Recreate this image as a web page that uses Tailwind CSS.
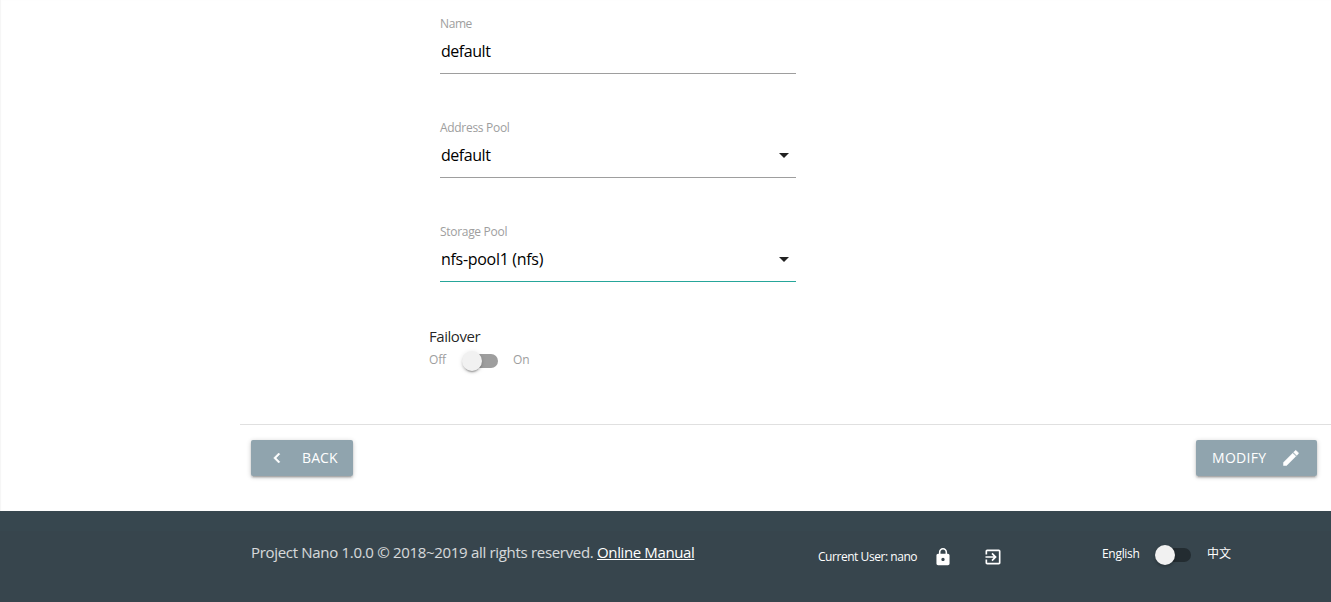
<!DOCTYPE html>
<html lang="en">
<head>
<meta charset="utf-8">
<title>Project Nano</title>
<script src="https://cdn.jsdelivr.net/npm/@tailwindcss/browser@4"></script>
</head>
<body class="bg-white font-['Open_Sans','Noto_Sans_CJK_SC',sans-serif] text-[15px] text-black/87 h-[602px] flex flex-col overflow-hidden">
<main class="h-[511px] shrink-0 pl-60 shadow-[inset_1px_0_1px_rgba(0,0,0,0.04)]">
  <form class="h-[424px] pl-[189px] pt-[15px]">
    <div class="ml-[11px] w-[356px] h-[104px]">
      <label class="block text-xs leading-[18px] text-[#9e9e9e] tracking-[-0.4px]">Name</label>
      <div class="h-[41px] border-b border-[#9e9e9e] text-black text-base leading-[37px] tracking-[-0.45px] pl-px">default</div>
    </div>
    <div class="ml-[11px] w-[356px] h-[104px]">
      <label class="block text-xs leading-[18px] text-[#9e9e9e] tracking-[-0.3px]">Address Pool</label>
      <div class="h-[41px] border-b border-[#9e9e9e] text-black text-base leading-[37px] tracking-[-0.45px] pl-px flex justify-between"><span>default</span><svg class="w-6 h-6 mt-[6px]" viewBox="0 0 24 24"><path fill="#212121" d="M7 10l5 5 5-5z"/></svg></div>
    </div>
    <div class="ml-[11px] w-[356px] h-[104px]">
      <label class="block text-xs leading-[18px] text-[#9e9e9e] tracking-[-0.3px]">Storage Pool</label>
      <div class="h-[41px] border-b border-[#26a69a] text-black text-base leading-[37px] tracking-[-0.3px] pl-px flex justify-between"><span>nfs-pool1 (nfs)</span><svg class="w-6 h-6 mt-[6px]" viewBox="0 0 24 24"><path fill="#212121" d="M7 10l5 5 5-5z"/></svg></div>
    </div>
    <div class="leading-[18px] h-[21px] tracking-[-0.45px]">Failover</div>
    <div class="flex items-center text-xs text-[#9e9e9e] h-6">
      <span class="w-[36px] tracking-[-0.2px]">Off</span>
      <span class="w-[33px] h-[14px] rounded-full bg-[#9e9e9e] mt-[2px] flex items-center"><span class="block w-5 h-5 shrink-0 -ml-[3px] rounded-full bg-[#f1f1f1] shadow-[0_2px_2px_0_rgba(0,0,0,0.14),0_1px_5px_0_rgba(0,0,0,0.12),0_3px_1px_-2px_rgba(0,0,0,0.2)]"></span></span>
      <span class="ml-[15px] tracking-[-0.2px]">On</span>
    </div>
  </form>
  <div class="h-[87px] border-t border-[#e0e0e0] pl-[11px] pr-[14px] pt-[15px] flex justify-between items-start">
    <button class="w-[102px] h-[36px] rounded-[2px] bg-[#90a4ae] text-white text-sm flex items-center pl-4 shadow-[0_2px_2px_0_rgba(0,0,0,0.14),0_3px_1px_-2px_rgba(0,0,0,0.12),0_1px_5px_0_rgba(0,0,0,0.2)]"><svg class="w-[20px] h-[20px]" viewBox="0 0 24 24"><path fill="#fff" stroke="#fff" stroke-width="0.6" d="M15.41 7.41L14 6l-6 6 6 6 1.41-1.41L10.83 12z"/></svg><span class="ml-[15px] tracking-[0.1px]">BACK</span></button>
    <button class="w-[121px] h-[36px] rounded-[2px] bg-[#90a4ae] text-white text-sm flex items-center justify-between px-4 shadow-[0_2px_2px_0_rgba(0,0,0,0.14),0_3px_1px_-2px_rgba(0,0,0,0.12),0_1px_5px_0_rgba(0,0,0,0.2)]"><span class="tracking-[0.3px]">MODIFY</span><svg class="w-[20px] h-[20px]" viewBox="0 0 24 24"><path fill="#fff" stroke="#fff" stroke-width="0.6" d="M3 17.25V21h3.75L17.81 9.94l-3.75-3.75L3 17.25zM20.71 7.04c.39-.39.39-1.02 0-1.41l-2.34-2.34c-.39-.39-1.02-.39-1.41 0l-1.83 1.83 3.75 3.75 1.83-1.83z"/></svg></button>
  </div>
</main>
<footer class="h-[91px] shrink-0 bg-[#37474f] pt-[20px]">
 <div class="h-[71px] bg-[#37454d] pl-[251px] flex items-start">
  <div class="w-[567px] h-[42px] leading-[42px] text-white/80 tracking-[-0.31px] whitespace-nowrap">Project Nano 1.0.0 © 2018~2019 all rights reserved. <a class="text-white underline tracking-[-0.38px]">Online Manual</a></div>
  <div class="w-[284px] flex items-center text-xs text-white h-[52px]">
    <span class="w-[117px] tracking-[-0.45px] whitespace-nowrap">Current User: nano</span>
    <svg class="w-[16px] h-[18px]" viewBox="3 1 18 22"><path fill="#fff" d="M18 8h-1V6c0-2.76-2.24-5-5-5S7 3.24 7 6v2H6c-1.100 0-2 .9-2 2v10c0 1.100.9 2 2 2h12c1.100 0 2-.9 2-2V10c0-1.100-.9-2-2-2zm-6 9c-1.100 0-2-.9-2-2s.9-2 2-2 2 .9 2 2-.9 2-2 2zm3.100-9H8.900V6c0-1.710 1.390-3.100 3.100-3.100 1.710 0 3.100 1.390 3.100 3.100v2z"/></svg>
    <svg class="w-[20px] h-[20px] ml-[32px]" viewBox="0 0 24 24"><path fill="#fff" d="M10.090 15.590L11.500 17l5-5-5-5-1.410 1.410L12.670 11H3v2h9.670l-2.580 2.590zM19 3H5c-1.110 0-2 .9-2 2v4h2V5h14v14H5v-4H3v4c0 1.100.89 2 2 2h14c1.100 0 2-.9 2-2V5c0-1.100-.9-2-2-2z"/></svg>
  </div>
  <div class="flex items-center text-xs text-white h-[46px]">
    <span class="w-[56px] tracking-[-0.3px]">English</span>
    <span class="w-[33px] h-[14px] rounded-full bg-[#232c31] mt-[2px] flex items-center"><span class="block w-5 h-5 shrink-0 -ml-[3px] rounded-full bg-[#f1f1f1] shadow-[0_2px_2px_0_rgba(0,0,0,0.14),0_1px_5px_0_rgba(0,0,0,0.12)]"></span></span>
    <span class="ml-4">中文</span>
  </div>
 </div>
</footer>
</body>
</html>
